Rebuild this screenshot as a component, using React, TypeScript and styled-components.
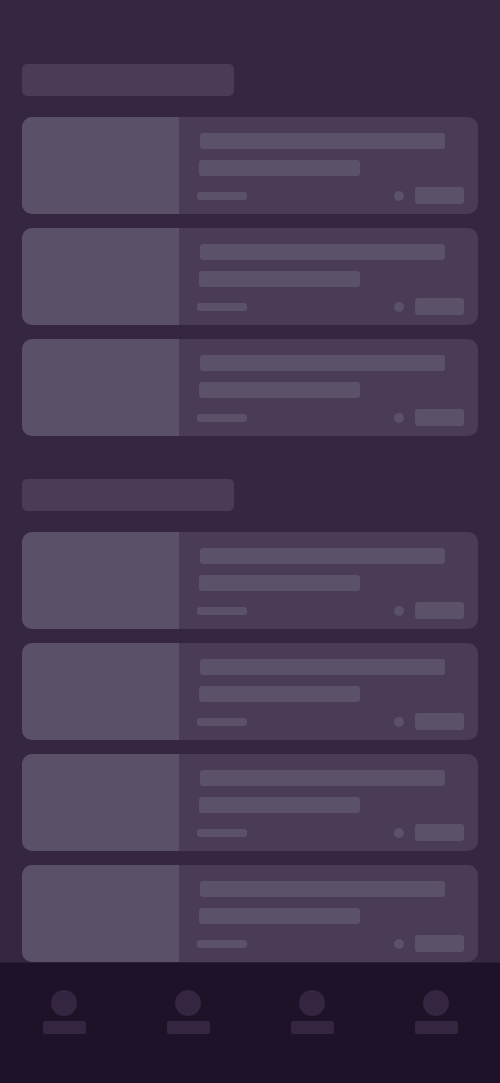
import React from "react";
import styled, { createGlobalStyle } from "styled-components";

const Global = createGlobalStyle`
  html, body { margin: 0; padding: 0; background: #352642; }
  body { font-family: "Liberation Sans", Arial, sans-serif; }
`;

const Page = styled.div`
  width: 500px;
  min-height: 1083px;
  background: #352642;
  box-sizing: border-box;
  padding: 64px 22px 130px;
  display: flex;
  flex-direction: column;
`;

const Section = styled.section`
  display: flex;
  flex-direction: column;
  & + & { margin-top: 43px; }
`;

const SectionTitle = styled.div`
  width: 212px;
  height: 32px;
  border-radius: 5px;
  background: #4a3c56;
  margin-bottom: 21px;
`;

const CardList = styled.div`
  display: flex;
  flex-direction: column;
  gap: 14px;
`;

const Card = styled.div`
  height: 97px;
  display: flex;
  border-radius: 10px;
  overflow: hidden;
  background: #4a3c56;
`;

const Thumb = styled.div`
  width: 157px;
  flex-shrink: 0;
  background: #5a5067;
`;

const Body = styled.div`
  flex: 1;
  display: flex;
  flex-direction: column;
  padding: 16px 14px 10px 18px;
`;

const Bar = styled.div<{ $w: number; $ml: number; $mb: number }>`
  width: ${(p) => p.$w}px;
  height: 16px;
  margin-left: ${(p) => p.$ml}px;
  margin-bottom: ${(p) => p.$mb}px;
  border-radius: 3px;
  background: #5b5168;
`;

const Footer = styled.div`
  height: 17px;
  display: flex;
  align-items: center;
`;

const Meta = styled.div`
  width: 50px;
  height: 8px;
  border-radius: 3px;
  background: #5b5168;
`;

const Dot = styled.div`
  margin-left: auto;
  width: 10px;
  height: 10px;
  border-radius: 50%;
  background: #5b5168;
`;

const Button = styled.div`
  margin-left: 11px;
  width: 49px;
  height: 17px;
  border-radius: 3px;
  background: #5b5168;
`;

const Nav = styled.nav`
  position: fixed;
  left: 0;
  right: 0;
  bottom: 0;
  height: 121px;
  box-sizing: border-box;
  border-top: 1px solid #2a1e35;
  background: #1d1228;
  display: grid;
  grid-template-columns: repeat(4, 124px);
  padding: 27px 2px 0;
  align-content: start;
`;

const NavItem = styled.div`
  display: flex;
  flex-direction: column;
  align-items: center;
  gap: 5px;
`;

const NavIcon = styled.div`
  width: 26px;
  height: 26px;
  border-radius: 50%;
  background: #342540;
`;

const NavLabel = styled.div`
  width: 43px;
  height: 13px;
  border-radius: 2px;
  background: #342540;
`;

const SkeletonCard = () => (
  <Card>
    <Thumb />
    <Body>
      <Bar $w={245} $ml={3} $mb={11} />
      <Bar $w={161} $ml={2} $mb={11} />
      <Footer>
        <Meta />
        <Dot />
        <Button />
      </Footer>
    </Body>
  </Card>
);

export default function App() {
  return (
    <>
      <Global />
      <Page>
        <Section>
          <SectionTitle />
          <CardList>
            {[0, 1, 2].map((i) => (
              <SkeletonCard key={i} />
            ))}
          </CardList>
        </Section>
        <Section>
          <SectionTitle />
          <CardList>
            {[0, 1, 2, 3].map((i) => (
              <SkeletonCard key={i} />
            ))}
          </CardList>
        </Section>
      </Page>
      <Nav>
        {[0, 1, 2, 3].map((i) => (
          <NavItem key={i}>
            <NavIcon />
            <NavLabel />
          </NavItem>
        ))}
      </Nav>
    </>
  );
}
